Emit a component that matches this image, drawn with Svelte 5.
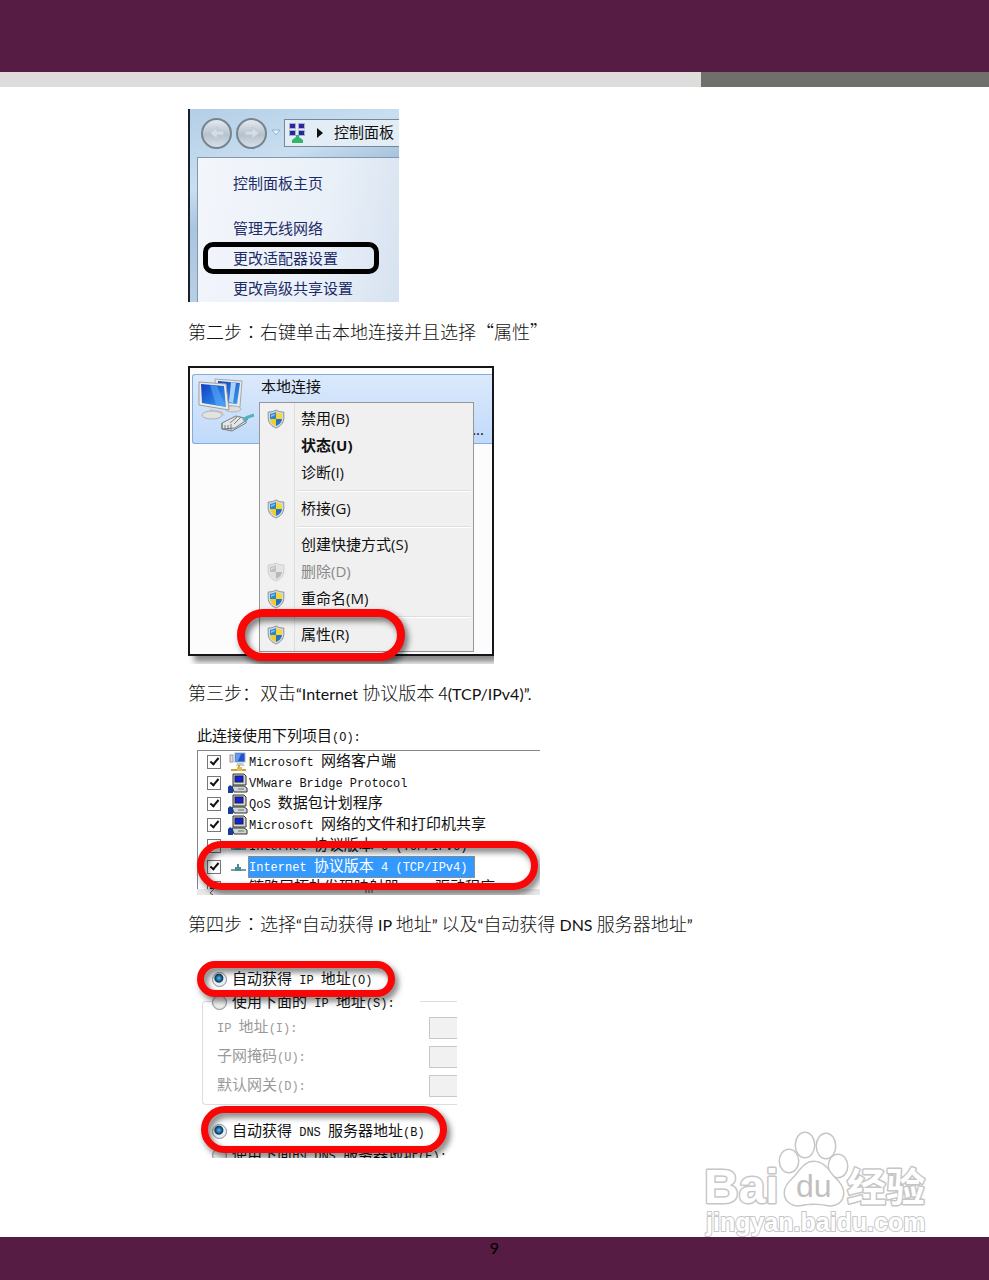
<script>
	let checked = $state([true, true, true, true, true, true, true]);
	let ipMode = $state('auto');
	let dnsMode = $state('auto');

	const sideLinks = ['管理无线网络', '更改适配器设置', '更改高级共享设置'];

	const menu = [
		{ label: '禁用(B)', shield: true },
		{ label: '状态(U)', bold: true },
		{ label: '诊断(I)' },
		{ separator: true },
		{ label: '桥接(G)', shield: true },
		{ separator: true },
		{ label: '创建快捷方式(S)' },
		{ label: '删除(D)', shield: true, disabled: true },
		{ label: '重命名(M)', shield: true },
		{ separator: true },
		{ label: '属性(R)', shield: true }
	];

	const protocols = [
		{ name: 'Microsoft 网络客户端', icon: 'client' },
		{ name: 'VMware Bridge Protocol', icon: 'service' },
		{ name: 'QoS 数据包计划程序', icon: 'service' },
		{ name: 'Microsoft 网络的文件和打印机共享', icon: 'service' },
		{ name: 'Internet 协议版本 6 (TCP/IPv6)', icon: 'protocol' },
		{ name: 'Internet 协议版本 4 (TCP/IPv4)', icon: 'protocol', selected: true },
		{ name: '链路层拓扑发现映射器 I/O 驱动程序', icon: 'protocol' }
	];

	const addressFields = [
		{ id: 'ip', label: 'IP 地址(I):' },
		{ id: 'mask', label: '子网掩码(U):' },
		{ id: 'gateway', label: '默认网关(D):' }
	];

	// Splits a label into runs of ASCII and Chinese characters
	function runs(text) {
		return text.match(/[\x20-\x7e]+|[^\x20-\x7e]+/g).map((t) => ({
			text: t,
			ascii: /^[\x20-\x7e]/.test(t)
		}));
	}
</script>

{#snippet mixed(text)}<span class="mixed">{#each runs(text) as run}<span class:mono={run.ascii}>{run.text}</span>{/each}</span>{/snippet}

{#snippet latin(text)}<span class="latin">{text}</span>{/snippet}

{#snippet shield(disabled)}
	<svg class="shield" class:gray={disabled} viewBox="0 0 18 20" width="18" height="20" aria-hidden="true">
		<path d="M9 1C6.500 2.600 4 3 1.200 3V9c0 5 3.500 8.300 7.800 10 4.300-1.700 7.800-5 7.800-10V3C14 3 11.500 2.600 9 1z" fill="#d5dade" stroke="#8b949b" />
		<path d="M9 3C7 4.200 5 4.700 3 4.800V10h6z" fill="#2d84cf" />
		<path d="M9 3c2 1.200 4 1.700 6 1.800V10H9z" fill="#f6d63b" />
		<path d="M3 10h6v7C5.500 15.500 3.300 13.200 3 10z" fill="#f3cc2c" />
		<path d="M15 10H9v7c3.500-1.500 5.700-3.800 6-7z" fill="#2474bd" />
		<path d="M4 6c1.500-.2 3-.6 4-1.300V6L4 8z" fill="#8bc6ee" />
	</svg>
{/snippet}

{#snippet protocolIcon(kind)}
	<svg class="protocol-icon" viewBox="0 0 20 20" width="20" height="20" aria-hidden="true">
		{#if kind === 'client'}
			<rect x="2" y="3" width="3" height="7" fill="#ddd" stroke="#999" />
			<rect x="7" y="1" width="10" height="9" fill="#2253c8" stroke="#9db4d9" />
			<path d="M8 2h5l-3 7H8z" fill="#5f9cf1" />
			<path d="M9 11h6l2 3H8z" fill="#c9c9c9" />
			<path d="M11 13v4M3 18h15" stroke="#c8a53c" stroke-width="2" />
			<rect x="9" y="15" width="5" height="4" fill="#e2bd4d" />
		{:else if kind === 'service'}
			<path d="M5 1h11l2 2v9H5z" fill="#d8d8d8" stroke="#333" />
			<rect x="7" y="3" width="8" height="6" fill="#1024d8" stroke="#223" />
			<path d="M4 13h12l3 2v4H6z" fill="#d4d4d4" stroke="#333" />
			<path d="M10 16h6" stroke="#4b8a4b" stroke-width="1" />
			<path d="M0 14l2-2 3 2v6H0z" fill="#173c9c" />
		{:else}
			<path d="M3 13h15" stroke="#7f9da8" stroke-width="2" />
			<rect x="7" y="10" width="6" height="4" fill="#4b8e96" />
			<path d="M10 7v4" stroke="#4b8e96" stroke-width="2" />
		{/if}
	</svg>
{/snippet}

<div class="page">
	<header class="banner">
		<div class="banner-light"></div>
		<div class="banner-dark"></div>
	</header>

	<main>
		<!-- Control panel -->
		<section class="figure control-panel">
			<div class="nav">
				<button class="round" aria-label="后退">
					<svg viewBox="0 0 20 20" width="20" height="20"><path d="M3 10l7-6v4h7v4h-7v4z" fill="#d3dde5" stroke="#b9c7d2" /></svg>
				</button>
				<button class="round" aria-label="前进">
					<svg viewBox="0 0 20 20" width="20" height="20"><path d="M17 10l-7-6v4H3v4h7v4z" fill="#d3dde5" stroke="#b9c7d2" /></svg>
				</button>
				<svg class="caret" viewBox="0 0 10 8" width="10" height="8"><path d="M1 1h8L5 6z" fill="#e8f2fa" stroke="#8fb2cc" /></svg>
				<div class="address">
					<svg viewBox="0 0 18 22" width="18" height="22" aria-hidden="true">
						<g fill="#28289c" stroke="#a9aed9">
							<rect x="1.500" y="1.500" width="6" height="5" />
							<rect x="10.500" y="1.500" width="6" height="5" />
							<rect x="1.500" y="8.500" width="6" height="5" />
							<rect x="10.500" y="8.500" width="6" height="5" />
						</g>
						<path d="M8 13h3v2l4 3v3H4v-3l4-3z" fill="#35b56b" />
					</svg>
					<svg viewBox="0 0 6 10" width="6" height="10" aria-hidden="true"><path d="M0 0l6 5-6 5z" fill="#111" /></svg>
					<span>控制面板</span>
				</div>
			</div>
			<nav class="side">
				<a class="home" href="#home">控制面板主页</a>
				{#each sideLinks as link}
					<a href="#{link}">{link}</a>
				{/each}
			</nav>
			<div class="ring-black"></div>
		</section>

		<p class="step"><span>第二步<span class="tc">：</span>右键单击本地连接并且选择“属性”</span></p>

		<!-- Local connection with context menu -->
		<section class="figure connection">
			<div class="window">
				<div class="adapter">
					<svg viewBox="0 0 58 58" width="58" height="58" aria-hidden="true">
						<defs>
							<linearGradient id="screen" x1="0" y1="0" x2="1" y2="1">
								<stop offset="0" stop-color="#0d3fc4" />
								<stop offset="1" stop-color="#3c9cf4" />
							</linearGradient>
						</defs>
						<path d="M18 2l27 2-2 26-24-3z" fill="#e9e9e5" stroke="#a6a9a8" />
						<path d="M21 4l22 2-3 21-18-2z" fill="url(#screen)" />
						<path d="M34 5l5 1-3 20-4-1z" fill="#a9d2f8" />
						<path d="M13 32l12 2 3 5-17-3z" fill="#c9cbc9" />
						<ellipse cx="15" cy="38" rx="10" ry="4" fill="#e2e3e1" stroke="#aeb1b0" />
						<ellipse cx="36" cy="32" rx="8" ry="3" fill="#dcdedd" stroke="#b5b8b7" />
						<path d="M2 5l27 2 3 26-30-5z" fill="#ecece8" stroke="#9c9f9e" />
						<path d="M4 7l23 2 2 21-24-4z" fill="url(#screen)" />
						<path d="M13 8l7 1 9 21-10-2z" fill="#5aa8f6" opacity=".6" />
						<path d="M25 46l14-7 12 3-13 9-13 1z" fill="#e4e6e5" stroke="#777c7d" />
						<path d="M25 46v6l10 2 14-8v-5M28 48v4M31 48v5M34 47v6M40 40l-7 6M44 40l-7 7" fill="none" stroke="#777c7d" />
						<path d="M46 43c4-3 7-4 11-5" fill="none" stroke="#52b3bd" stroke-width="3" />
					</svg>
					<span class="adapter-name">本地连接</span>
					<span class="more">...</span>
				</div>
				<div class="menu" role="menu">
					{#each menu as item}
						{#if item.separator}
							<div class="separator" role="separator"></div>
						{:else}
							<button role="menuitem" class="menu-item" class:bold={item.bold} disabled={item.disabled}>
								<span class="menu-icon">{#if item.shield}{@render shield(item.disabled)}{/if}</span>
								<span class="menu-label">{item.label}</span>
							</button>
						{/if}
					{/each}
				</div>
			</div>
			<div class="ring ring-menu"></div>
		</section>

		<p class="step"><span>第三步：双击{@render latin('“Internet ')}协议版本 4{@render latin('(TCP/IPv4)”.')}</span></p>

		<!-- Connection items -->
		<section class="figure items">
			<div class="items-title">{@render mixed('此连接使用下列项目(O):')}</div>
			<div class="items-list">
				{#each protocols as protocol, i}
					<label class="item">
						<input type="checkbox" bind:checked={checked[i]} />
						{@render protocolIcon(protocol.icon)}
						<span class="item-name" class:selected={protocol.selected}>{@render mixed(protocol.name)}</span>
					</label>
				{/each}
			</div>
			<div class="scroll">
				<svg viewBox="0 0 6 6" width="6" height="6"><path d="M5 0L1 4l3 2" fill="none" stroke="#555" /></svg>
				<svg viewBox="0 0 10 6" width="10" height="6"><path d="M1 0v4M4 0v4M7 0v4" stroke="#444" /></svg>
				<span></span>
			</div>
			<div class="ring ring-item"></div>
		</section>

		<p class="step"><span>第四步<span class="tc">：</span>选择{@render latin('“')}自动获得{@render latin(' IP ')}地址{@render latin('” ')}以及{@render latin('“')}自动获得{@render latin(' DNS ')}服务器地址{@render latin('”')}</span></p>

		<!-- IP settings -->
		<section class="figure ip">
			<label class="radio first">
				<input type="radio" name="ip" value="auto" bind:group={ipMode} />
				{@render mixed('自动获得 IP 地址(O)')}
			</label>
			<div class="group">
				<label class="radio legend">
					<input type="radio" name="ip" value="manual" bind:group={ipMode} />
					{@render mixed('使用下面的 IP 地址(S):')}
				</label>
				{#each addressFields as field}
					<div class="field">
						<label for={field.id}>{@render mixed(field.label)}</label>
						<input id={field.id} type="text" disabled />
					</div>
				{/each}
			</div>
			<label class="radio dns">
				<input type="radio" name="dns" value="auto" bind:group={dnsMode} />
				{@render mixed('自动获得 DNS 服务器地址(B)')}
			</label>
			<label class="radio cut">
				<input type="radio" name="dns" value="manual" bind:group={dnsMode} />
				{@render mixed('使用下面的 DNS 服务器地址(E):')}
			</label>
			<div class="ring ring-ip"></div>
			<div class="ring ring-dns"></div>
		</section>
	</main>

	<footer>9</footer>

	<!-- Watermark -->
	<svg class="watermark" viewBox="0 0 240 116" width="240" height="116" role="img" aria-label="Baidu 经验">
		<g class="mark">
			<text x="3" y="77" font-size="48">Bai</text>
			<ellipse cx="88" cy="35" rx="9" ry="11" />
			<ellipse cx="104" cy="19" rx="9" ry="12" />
			<ellipse cx="125" cy="20" rx="9" ry="12" />
			<ellipse cx="137" cy="40" rx="9" ry="11" />
			<path d="M113 36c-8 0-12 6-16 11-5 7-13 11-13 20 0 8 7 13 15 12 10-2 19-2 28 0 9 1 15-4 15-12 0-8-7-13-12-19-4-6-9-12-17-12z" />
			<text class="cjk" x="146" y="75" font-size="39">经验</text>
			<text x="5" y="105" font-size="25" class="domain">jingyan.baidu.com</text>
		</g>
		<text class="du" x="95" y="71" font-size="32">du</text>
	</svg>
</div>

<style>
	:global(body) {
		margin: 0;
		background: #fff;
	}

	.page {
		position: relative;
		display: flex;
		flex-direction: column;
		min-height: 100vh;
		font-family: 'Open Sans', 'Noto Sans CJK SC', sans-serif;
		font-size: 15px;
		color: #111;
	}

	.banner {
		display: flex;
		height: 15px;
		border-top: 72px solid #561c43;
	}

	.banner-light {
		flex: 701;
		background: #dedddb;
	}

	.banner-dark {
		flex: 288;
		background: #6f706c;
	}

	main {
		flex: 1;
		padding: 22px 20px 79px 188px;
	}

	.figure {
		position: relative;
		box-sizing: border-box;
	}

	.step {
		display: flex;
		align-items: center;
		box-sizing: border-box;
		height: 64px;
		margin: 0;
		padding-bottom: 6px;
		font-family: 'Noto Sans CJK SC', sans-serif;
		font-size: 18px;
		font-weight: 300;
		line-height: 24px;
		white-space: pre-wrap;
	}

	.tc {
		font-family: 'Noto Sans CJK TC', sans-serif;
	}

	.latin {
		font-family: Lato, sans-serif;
		font-size: 16px;
		font-weight: 400;
	}

	.mixed {
		white-space: pre;
	}

	.mono {
		font-family: 'Liberation Mono', monospace;
		font-size: 12px;
	}

	/* Control panel */
	.control-panel {
		width: 211px;
		height: 193px;
		border-left: 2px solid #18202c;
		overflow: hidden;
		background: linear-gradient(160deg, #b4cee6, #c9dff0 30%, #a9c4de 45%, #c8dcee);
	}

	.nav {
		display: flex;
		align-items: center;
		height: 48px;
		padding-left: 11px;
	}

	.round {
		display: flex;
		align-items: center;
		justify-content: center;
		width: 31px;
		height: 31px;
		margin-right: 4px;
		padding: 0;
		border: 2px solid #76848f;
		border-radius: 50%;
		background: linear-gradient(#e3e9ee, #b6c2cc 55%, #d6e0e8);
	}

	.caret {
		margin-right: 3px;
	}

	.address {
		display: flex;
		flex: 1;
		align-items: center;
		gap: 11px;
		height: 26px;
		padding-left: 3px;
		border: 1px solid #74889b;
		border-right: 0;
		background: #e3edf6;
		line-height: 20px;
		white-space: nowrap;
	}

	.address span {
		padding-bottom: 3px;
	}

	.side {
		display: flex;
		flex-direction: column;
		height: 145px;
		margin-left: 7px;
		padding: 10px 0 0 35px;
		border: 1px solid #8497ad;
		border-right: 0;
		background: linear-gradient(100deg, #f3f6fb, #eaf0f8 60%, #d6e2f0);
		line-height: 30px;
	}

	.side a {
		color: #1d2c66;
		text-decoration: none;
	}

	.side .home {
		margin-bottom: 15px;
	}

	.ring-black {
		position: absolute;
		top: 133px;
		left: 13px;
		width: 166px;
		height: 22px;
		border: 5px solid #000;
		border-radius: 10px;
	}

	/* Connection window */
	.connection {
		width: 306px;
		height: 298px;
		overflow: hidden;
	}

	.window {
		box-sizing: border-box;
		height: 290px;
		padding: 6px 0 0 2px;
		border: 2px solid #15151b;
		background: #fcfcfc;
		box-shadow: 6px 6px 6px #888;
	}

	.adapter {
		display: flex;
		box-sizing: border-box;
		height: 70px;
		padding: 2px 8px 0 4px;
		border: 1px solid #84acdd;
		border-right: 0;
		border-radius: 3px 0 0 3px;
		background: linear-gradient(#dbe9fb, #c1dafa);
	}

	.adapter-name {
		flex: 1;
		padding-left: 6px;
		line-height: 18px;
	}

	.more {
		align-self: flex-end;
		line-height: 28px;
	}

	.menu {
		position: absolute;
		top: 36px;
		left: 71px;
		box-sizing: border-box;
		width: 215px;
		padding: 2px 2px 3px;
		border: 1px solid #979797;
		background: linear-gradient(90deg, #f1f1f1 34px, #dedede 34px, #dedede 35px, #f0f0f0 35px);
	}

	.menu-item {
		display: flex;
		align-items: center;
		width: 100%;
		height: 27px;
		padding: 0;
		border: 0;
		background: none;
		color: #111;
		font: inherit;
		text-align: left;
	}

	.menu-item.bold {
		font-weight: 700;
	}

	.menu-item:disabled {
		color: #888;
	}

	.menu-icon {
		display: flex;
		width: 34px;
		margin-right: 5px;
		padding-left: 5px;
		box-sizing: border-box;
	}

	.menu-label {
		padding-bottom: 3px;
	}

	.shield.gray {
		filter: grayscale(1);
		opacity: 0.4;
	}

	.separator {
		box-sizing: border-box;
		height: 9px;
		margin: 0 0 0 35px;
		background: linear-gradient(transparent 4px, #ddd 4px, #ddd 5px, #fff 5px, #fff 6px, transparent 6px);
	}

	.ring {
		position: absolute;
		box-sizing: border-box;
		border: 7px solid #f90606;
		filter: drop-shadow(3px 4px 3px rgba(0, 0, 0, 0.55));
		pointer-events: none;
	}

	.ring-menu {
		top: 243px;
		left: 49px;
		width: 168px;
		height: 52px;
		border-width: 8px;
		border-radius: 26px;
	}

	/* Connection items */
	.items {
		width: 352px;
		height: 167px;
		padding-left: 9px;
		overflow: hidden;
	}

	.items-title {
		height: 22px;
		line-height: 14px;
	}

	.items-list {
		height: 138px;
		border-top: 1px solid #828790;
		border-left: 1px solid #828790;
		overflow: hidden;
	}

	.item {
		display: flex;
		align-items: center;
		height: 21px;
		padding-left: 9px;
		line-height: 19px;
	}

	input[type='checkbox'] {
		display: grid;
		place-items: center;
		width: 14px;
		height: 14px;
		margin: 0 7px 0 0;
		border: 1px solid #777;
		background: #fff;
		appearance: none;
	}

	input[type='checkbox']:checked::before {
		content: '';
		width: 7px;
		height: 3px;
		border: solid #111;
		border-width: 0 0 2px 2px;
		transform: translateY(-1px) rotate(-50deg);
	}

	.item-name {
		padding: 0 1px;
	}

	.item-name.selected {
		padding: 0 8px 0 1px;
		outline: 1px dotted #c78a44;
		outline-offset: -1px;
		background: #3399ff;
		color: #fff;
	}

	.scroll {
		display: flex;
		justify-content: space-between;
		height: 6px;
		padding: 0 16px 0 12px;
		background: #e8e8e8;
	}

	.ring-item {
		top: 113px;
		left: 9px;
		width: 341px;
		height: 49px;
		border-radius: 25px;
	}

	/* IP settings */
	.ip {
		width: 269px;
		height: 199px;
		padding: 8px 0 0 14px;
		overflow: hidden;
	}

	.radio {
		display: flex;
		align-items: center;
		height: 24px;
		padding-left: 10px;
		line-height: 20px;
	}

	input[type='radio'] {
		width: 15px;
		height: 15px;
		margin: 0 5px 0 0;
		border: 1px solid #8a8f94;
		border-radius: 50%;
		background: radial-gradient(#f4f4f4 40%, #d4d4d4);
		appearance: none;
	}

	input[type='radio']:checked {
		background: radial-gradient(circle at 45% 40%, #5fc4ef 0, #135a8e 3px, #12395c 4px, #e8eef2 5px);
	}

	.group {
		box-sizing: border-box;
		height: 104px;
		margin-top: 10px;
		border: 1px solid #d5dfe5;
		border-right: 0;
		border-radius: 4px 0 0 4px;
	}

	.legend {
		width: 208px;
		height: 22px;
		margin: -11px 0 0 9px;
		padding: 0;
		background: #fff;
	}

	.field {
		display: flex;
		align-items: center;
		justify-content: space-between;
		height: 29px;
		padding-left: 14px;
		color: #999;
		line-height: 20px;
	}

	.field input {
		box-sizing: border-box;
		width: 28px;
		height: 22px;
		border: 1px solid #c3c9ce;
		border-right: 0;
		background: #f1f1f1;
	}

	.dns {
		margin-top: 14px;
	}

	.ring-ip {
		top: 2px;
		left: 9px;
		width: 198px;
		height: 36px;
		border-radius: 18px;
	}

	.ring-dns {
		top: 147px;
		left: 13px;
		width: 246px;
		height: 47px;
		border-radius: 24px;
	}

	footer {
		height: 43px;
		background: #561c43;
		color: #000;
		font-family: Lato, sans-serif;
		font-size: 16px;
		line-height: 22px;
		text-align: center;
	}

	/* Watermark */
	.watermark {
		position: absolute;
		right: 48px;
		bottom: 38px;
		font-family: 'Liberation Sans', sans-serif;
		font-weight: 700;
	}

	.mark {
		fill: #fff;
		stroke: #c6c6c6;
		stroke-width: 3px;
		stroke-linejoin: round;
		paint-order: stroke;
	}

	.cjk {
		font-family: 'Noto Sans CJK SC', sans-serif;
	}

	.domain {
		stroke-width: 2px;
	}

	.du {
		fill: #c0c0c0;
		font-weight: 400;
	}
</style>
